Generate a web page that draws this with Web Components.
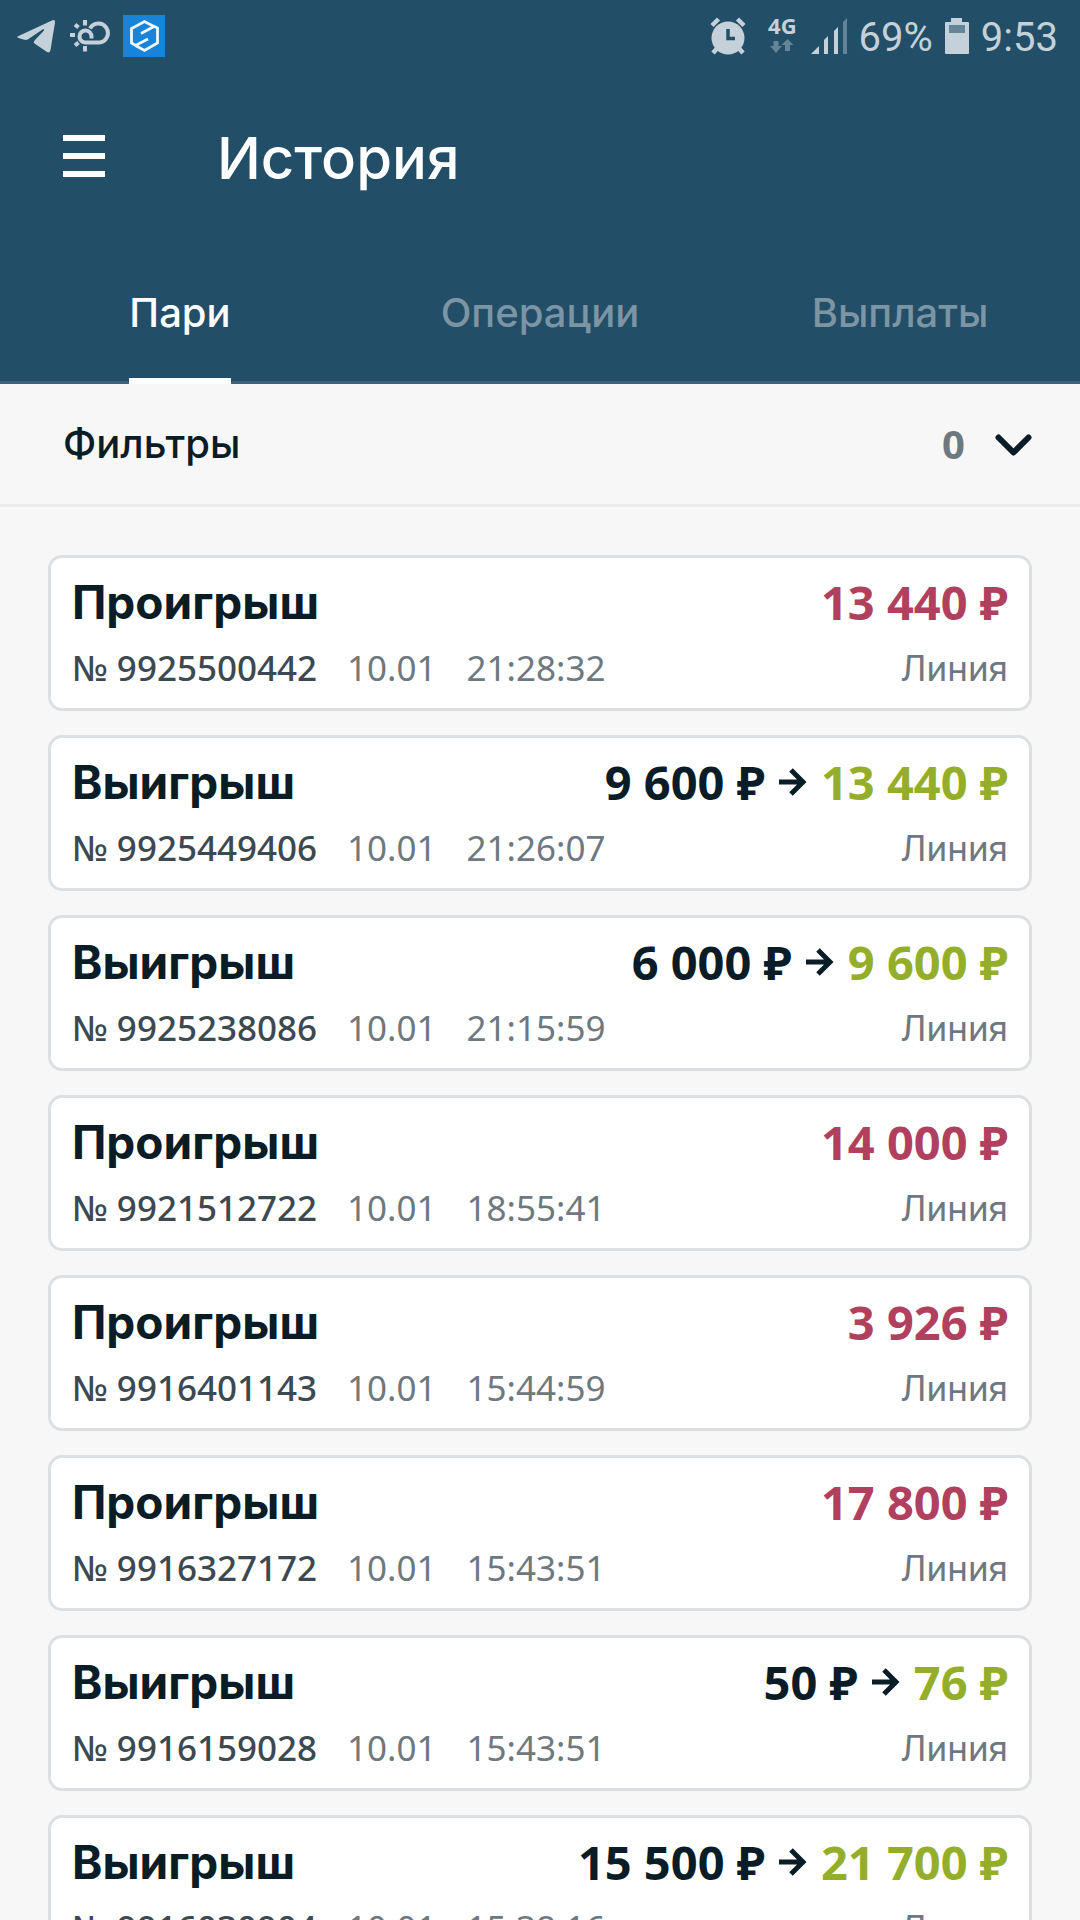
<!DOCTYPE html>
<html lang="ru">
<head>
<meta charset="utf-8">
<meta name="viewport" content="width=device-width, initial-scale=1">
<title>История</title>
<style>
  html, body { height: 100%; margin: 0; }
  body {
    background: #f7f7f7;
    color: #0a1c26;
    font-family: Inter, "Noto Sans", sans-serif;
    overflow: hidden;
  }
</style>
</head>
<body>
<history-app></history-app>

<template id="status-bar">
  <style>
    :host {
      display: flex; align-items: center; justify-content: space-between;
      height: 72px; padding: 0 22px 0 16px; color: #c4d1da;
      font-family: Roboto, sans-serif; font-size: 40px; line-height: 48px;
    }
    .group { display: flex; align-items: center; }
    .left { gap: 12px; }
    svg { display: block; flex: none; }
    .text { padding-top: 4px; }
    .alarm { margin-right: 22px; }
    .net { display: flex; flex-direction: column; align-items: center; margin-right: 14px; font: 700 22px/20px "Noto Sans", sans-serif; gap: 4px; padding-bottom: 4px; }
    .signal { margin-right: 12px; }
    .battery { margin: 0 12px; }
  </style>
  <div class="group left">
    <svg width="40" height="42" viewBox="0 0 40 42" fill="#c4d1da"><path d="M2.500 21 36.500 5.200Q39.500 4 39 7.500L34.500 35Q34 38.500 31 37L18.500 28.500Q17 27.300 18.500 25.500L28 15.500Q29 13.600 26.500 14.500L12.500 24Q10 25.500 7.500 24.500L2.500 23Q0 22 2.500 21Z"/></svg>
    <svg width="43" height="42" viewBox="0 0 43 42" fill="none" stroke="#c4d1da" stroke-width="4"><path d="M23.500 23.500V22a6 6 0 1 0-5.500 5.500h13a9.500 9.500 0 1 0-9-14"/><path d="M17 5v5.500M17 31v5.500M2 20h5M7 9.500l3.500 3M7 30.500l3.500-3"/></svg>
    <svg width="42" height="42" viewBox="0 0 42 42"><rect width="42" height="42" fill="#1784da"/><path d="M18 18.500 31 11.500 21.500 6.500 8.500 13.500v14.500l4 2.500L25 24M12.500 30.500l9 5 13-7.500v-15l-4-2" fill="none" stroke="#f2f6fa" stroke-width="2.800"/></svg>
  </div>
  <div class="group">
    <svg class="alarm" width="36" height="38" viewBox="0 0 36 38"><circle cx="18" cy="21" r="16.500" fill="#c4d1da"/><path d="M2 8.500 8.500 2M34 8.500 27.500 2M6.500 32 3 36M29.500 32l3.500 4" stroke="#c4d1da" stroke-width="4.500"/><path d="M18 12v9.500h7" fill="none" stroke="#224e67" stroke-width="3.500"/></svg>
    <span class="net">4G
      <svg width="24" height="14" viewBox="0 0 24 14" fill="#648497"><path d="M3.500 2h5v5H12l-6 7-6-7h3.500zM15 12h5V6h3.500L17.500 0l-6 6H15z"/></svg>
    </span>
    <svg class="signal" width="36" height="38" viewBox="0 0 36 38" fill="#c4d1da"><path d="M0 37l8-8v8zM13 23l4-4v18h-4zM23 14l4-4v27h-4z"/><path d="M32 5l4-4v36h-4z" fill="#648497"/></svg>
    <span class="text">69%</span>
    <svg class="battery" width="24" height="36" viewBox="0 0 24 36"><path d="M1 4h5V0h11v4h6q1 0 1 1v30q0 1-1 1H1q-1 0-1-1V5q0-1 1-1z" fill="#c4d1da"/><path d="M4 7h16v8H4z" fill="#648497"/></svg>
    <span class="text">9:53</span>
  </div>
</template>

<template id="app-header">
  <style>
    :host { display: block; background: #224e67; color: #fff; }
    .bar { display: flex; align-items: center; gap: 112px; height: 168px; padding: 0 63px; box-sizing: border-box; }
    button { padding: 0; border: 0; background: none; color: inherit; }
    svg { display: block; }
    h1 { margin: 0; padding-top: 4px; font-size: 58px; line-height: 68px; font-weight: 500; }
  </style>
  <slot name="status"></slot>
  <div class="bar">
    <button aria-label="Меню"><svg width="42" height="42" fill="#fff"><path d="M0 0h42v6H0zM0 18h42v6H0zM0 36h42v6H0z"/></svg></button>
    <h1><slot></slot></h1>
  </div>
  <slot name="tabs"></slot>
</template>

<template id="tab-strip">
  <style>
    :host { display: flex; height: 144px; box-sizing: border-box; border-bottom: 3px solid #3d6379; }
  </style>
  <slot></slot>
</template>

<template id="tab-item">
  <style>
    :host { flex: 1; display: flex; justify-content: center; height: 144px; }
    button {
      box-sizing: border-box; height: 144px; padding: 8px 0 0; border: 0; border-bottom: 6px solid transparent;
      background: none; color: #7b95a4; font: 500 40px/48px Inter, "Noto Sans", sans-serif;
    }
    :host([selected]) button { color: #fff; border-color: #fff; }
  </style>
  <button><slot></slot></button>
</template>

<template id="filter-bar">
  <style>
    :host { display: block; border-bottom: 3px solid #e9ebec; }
    button {
      display: flex; align-items: center; width: 100%; height: 120px; padding: 0 48px 0 63px; border: 0;
      background: none; color: inherit; font: 500 40px/48px Inter, "Noto Sans", sans-serif; text-align: left;
    }
    .label { flex: 1; }
    .count { color: #6e7880; font-family: "Noto Sans", sans-serif; font-weight: 700; margin-right: 30px; }
    svg { display: block; }
  </style>
  <button aria-expanded="false">
    <span class="label"><slot></slot></span>
    <span class="count"></span>
    <svg width="37" height="24" viewBox="0 0 37 24" fill="none" stroke="#0a1c26" stroke-width="6" stroke-linecap="round" stroke-linejoin="round"><path d="M3.500 5.500l15 15 15-15"/></svg>
  </button>
</template>

<template id="bet-card">
  <style>
    :host { display: block; padding: 21px; border: 3px solid #dce0e3; border-radius: 14px; background: #fff; }
    .row { display: flex; justify-content: space-between; align-items: center; white-space: nowrap; }
    .top { font-size: 46px; line-height: 46px; font-weight: 700; margin-bottom: 24px; }
    h2 { margin: 0; font: inherit; }
    .sum { display: flex; align-items: center; gap: 14px; font-family: "Noto Sans", sans-serif; font-size: 47px; }
    .loss { color: #b0405e; }
    .win { color: #94ae2a; }
    .meta { font-size: 35px; line-height: 38px; color: #6e7880; }
    .ids { display: flex; gap: 30px; font-family: "Noto Sans", sans-serif; }
    .num { color: #3c4950; font-weight: 500; }
    svg { display: block; }
  </style>
  <div class="row top"><h2></h2><div class="sum"></div></div>
  <div class="row meta">
    <div class="ids"><span class="num"></span><span class="date"></span><span class="time"></span></div>
    <span>Линия</span>
  </div>
</template>

<template id="history-app">
  <style>
    :host { display: block; height: 100vh; overflow: hidden; }
    main { display: flex; flex-direction: column; gap: 24px; padding: 48px; }
  </style>
  <app-header>
    <status-bar slot="status"></status-bar>
    История
    <tab-strip slot="tabs">
      <tab-item selected>Пари</tab-item>
      <tab-item>Операции</tab-item>
      <tab-item>Выплаты</tab-item>
    </tab-strip>
  </app-header>
  <filter-bar count="0">Фильтры</filter-bar>
  <main>
    <bet-card num="9925500442" time="21:28:32" loss="13 440"></bet-card>
    <bet-card num="9925449406" time="21:26:07" stake="9 600" win="13 440"></bet-card>
    <bet-card num="9925238086" time="21:15:59" stake="6 000" win="9 600"></bet-card>
    <bet-card num="9921512722" time="18:55:41" loss="14 000"></bet-card>
    <bet-card num="9916401143" time="15:44:59" loss="3 926"></bet-card>
    <bet-card num="9916327172" time="15:43:51" loss="17 800"></bet-card>
    <bet-card num="9916159028" time="15:43:51" stake="50" win="76"></bet-card>
    <bet-card num="9916030904" time="15:38:16" stake="15 500" win="21 700"></bet-card>
  </main>
</template>

<script>
  class TemplateElement extends HTMLElement {
    constructor() {
      super();
      const template = document.getElementById(this.localName);
      this.attachShadow({ mode: 'open' }).append(template.content.cloneNode(true));
    }
  }
  class StatusBar extends TemplateElement {}
  class AppHeader extends TemplateElement {}
  class TabStrip extends TemplateElement {}
  class TabItem extends TemplateElement {}
  class FilterBar extends TemplateElement {
    connectedCallback() {
      this.shadowRoot.querySelector('.count').textContent = this.getAttribute('count');
    }
  }
  class BetCard extends TemplateElement {
    connectedCallback() {
      const root = this.shadowRoot;
      const get = name => this.getAttribute(name);
      const won = this.hasAttribute('win');
      root.querySelector('h2').textContent = won ? 'Выигрыш' : 'Проигрыш';
      root.querySelector('.num').textContent = '№ ' + get('num');
      root.querySelector('.date').textContent = get('date') || '10.01';
      root.querySelector('.time').textContent = get('time');
      const arrow = '<svg width="28" height="28" viewBox="0 0 28 28" fill="none" stroke="currentColor" stroke-width="5"><path d="M0 14h24M12 2l12 12-12 12"/></svg>';
      root.querySelector('.sum').innerHTML = won
        ? `<span>${get('stake')} ₽</span>${arrow}<span class="win">${get('win')} ₽</span>`
        : `<span class="loss">${get('loss')} ₽</span>`;
    }
  }
  class HistoryApp extends TemplateElement {}
  customElements.define('status-bar', StatusBar);
  customElements.define('app-header', AppHeader);
  customElements.define('tab-strip', TabStrip);
  customElements.define('tab-item', TabItem);
  customElements.define('filter-bar', FilterBar);
  customElements.define('bet-card', BetCard);
  customElements.define('history-app', HistoryApp);
</script>
</body>
</html>
